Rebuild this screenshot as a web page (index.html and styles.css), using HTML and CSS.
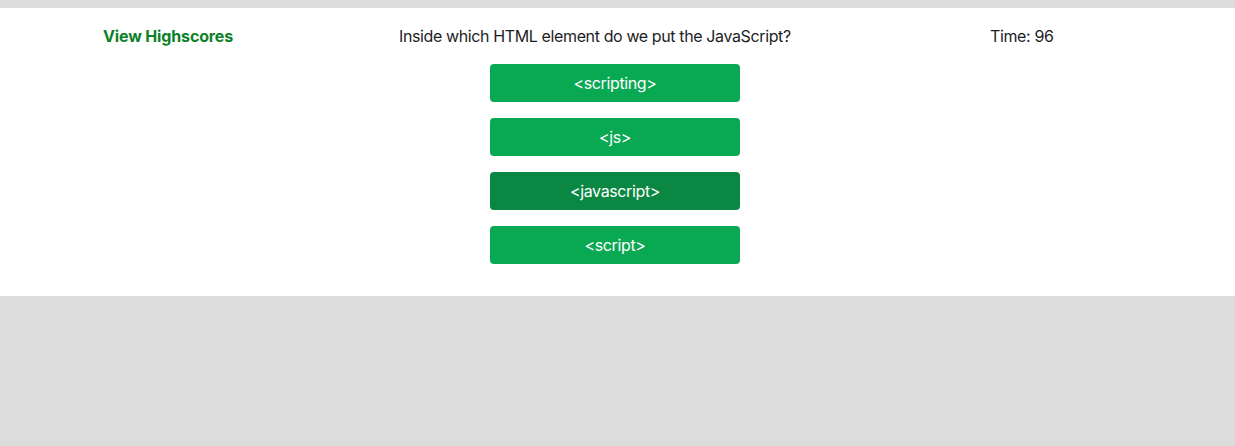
FILE: index.html
```html
<!DOCTYPE html>
<html lang="en">
<head>
<meta charset="utf-8">
<title>Quiz</title>
<link rel="stylesheet" href="styles.css">
</head>
<body>
<main class="panel">
  <header class="topbar">
    <a class="highscores" href="#">View Highscores</a>
    <p class="question">Inside which HTML element do we put the JavaScript?</p>
    <p class="timer">Time: 96</p>
  </header>
  <div class="choices">
    <button class="choice">&lt;scripting&gt;</button>
    <button class="choice">&lt;js&gt;</button>
    <button class="choice choice--hover">&lt;javascript&gt;</button>
    <button class="choice">&lt;script&gt;</button>
  </div>
</main>
</body>
</html>
```

FILE: styles.css
```css
html, body {
  margin: 0;
  padding: 0;
  background: #dcdcdc;
  font-family: Inter, "Noto Sans", sans-serif;
  font-size: 16px;
  color: #1d1d1f;
  letter-spacing: -0.38px;
}

.panel {
  margin-top: 8px;
  background: #ffffff;
  padding: 18px 0 32px;
}

.topbar {
  display: grid;
  grid-template-columns: 296px 591px auto;
  padding-left: 103px;
  align-items: center;
  height: 20px;
}

.topbar p { margin: 0; }

.highscores {
  color: #0a8228;
  font-weight: 700;
  text-decoration: none;
  letter-spacing: -0.14px;
}

.choices {
  display: flex;
  flex-direction: column;
  align-items: center;
  gap: 16px;
  margin-top: 18px;
  padding-right: 5px;
}

.choice {
  width: 250px;
  height: 38px;
  border: none;
  border-radius: 4px;
  background: #09a853;
  color: #ffffff;
  font-family: inherit;
  font-size: 16px;
  letter-spacing: -0.38px;
  cursor: pointer;
  padding: 0;
}

.choice--hover {
  background: #0a8843;
}
```
